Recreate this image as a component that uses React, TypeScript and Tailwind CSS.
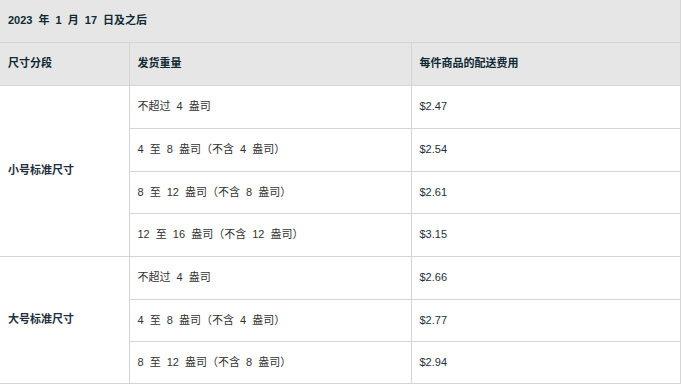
const rows = [
  { group: "小号标准尺寸", span: 4, weight: "不超过 4 盎司", fee: "$2.47", h: "h-[43px]" },
  { weight: "4 至 8 盎司（不含 4 盎司）", fee: "$2.54", h: "h-[43px]" },
  { weight: "8 至 12 盎司（不含 8 盎司）", fee: "$2.61", h: "h-[42px]" },
  { weight: "12 至 16 盎司（不含 12 盎司）", fee: "$3.15", h: "h-[43px]" },
  { group: "大号标准尺寸", span: 3, weight: "不超过 4 盎司", fee: "$2.66", h: "h-[43px]" },
  { weight: "4 至 8 盎司（不含 4 盎司）", fee: "$2.77", h: "h-[42px]" },
  { weight: "8 至 12 盎司（不含 8 盎司）", fee: "$2.94", h: "h-[42px]" },
];

const cell = "border border-[#d5d5d5] px-2 align-middle";

export default function App() {
  return (
    <div className="w-[683px] h-[385px] bg-white overflow-hidden font-['Liberation_Sans','Noto_Sans_CJK_SC',sans-serif] text-[11px] leading-[15px] [word-spacing:3px]">
      <table className="w-[681px] table-fixed border-collapse">
        <colgroup>
          <col className="w-[129px]" />
          <col className="w-[282px]" />
          <col />
        </colgroup>
        <thead className="bg-[#e6e6e6] text-[#0f2a33] font-bold">
          <tr className="h-[42px]">
            <th colSpan={3} className={`${cell} border-l-0 border-t-0 text-left`}>
              2023 年 1 月 17 日及之后
            </th>
          </tr>
          <tr className="h-[43px]">
            <th className={`${cell} border-l-0 text-left`}>尺寸分段</th>
            <th className={`${cell} text-left`}>发货重量</th>
            <th className={`${cell} text-left`}>每件商品的配送费用</th>
          </tr>
        </thead>
        <tbody className="text-[#333]">
          {rows.map((r, i) => (
            <tr key={i} className={r.h}>
              {r.group && (
                <td rowSpan={r.span} className={`${cell} border-l-0 font-bold text-[#232f3e]`}>
                  {r.group}
                </td>
              )}
              <td className={cell}>{r.weight}</td>
              <td className={`${cell} text-[#232f3e]`}>{r.fee}</td>
            </tr>
          ))}
        </tbody>
      </table>
    </div>
  );
}
